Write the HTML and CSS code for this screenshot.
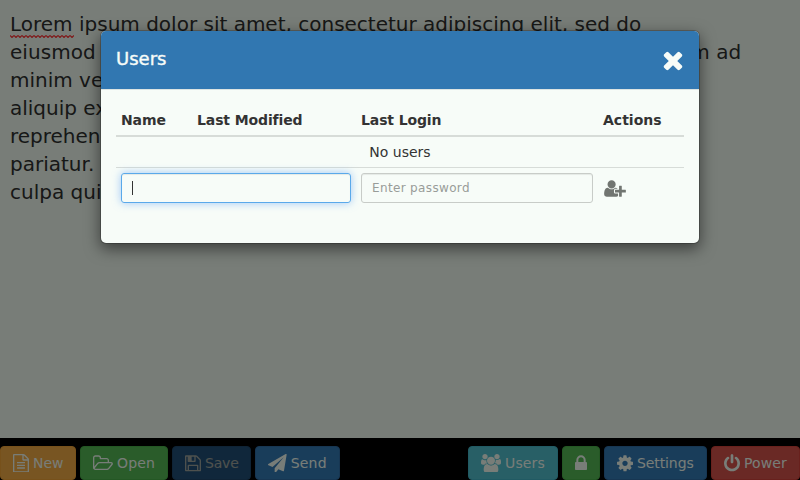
FILE: index.html
```
<!DOCTYPE html>
<html lang="en">
<head>
<meta charset="utf-8">
<title>Editor</title>
<link rel="stylesheet" href="styles.css">
</head>
<body>
<div class="app">
  <main class="editor"><span class="misspelt">Lorem<svg class="squiggle" width="64" height="3" viewBox="0 0 64 3"><defs><pattern id="zig" width="4" height="3" patternUnits="userSpaceOnUse"><path d="M0 .5L2 2.5L4 .5" fill="none" stroke="#f33" stroke-width="1.200"/></pattern></defs><rect width="64" height="3" fill="url(#zig)"/></svg></span> ipsum dolor sit amet, consectetur adipiscing elit, sed do<br><span class="wide">eiusmod tempor incididunt ut labore et dolore magna aliqua. Ut enim ad</span><br>minim veniam, quis nostrud exercitation ullamco laboris nisi ut<br>aliquip ex ea commodo consequat. Duis aute irure dolor in<br>reprehenderit in voluptate velit esse cillum dolore eu fugiat nulla<br>pariatur. Excepteur sint occaecat cupidatat non proident, sunt in<br>culpa qui officia deserunt mollit anim id est laborum.</main>
  <footer class="toolbar">
    <div class="group">
      <button class="btn warning new"><svg class="icon file" viewBox="128 0 1536 1792"><path d="M1596 380q28 28 48 76t20 88v1152q0 40-28 68t-68 28h-1344q-40 0-68-28t-28-68v-1600q0-40 28-68t68-28h896q40 0 88 20t76 48zm-444-244v376h376q-10-29-22-41l-313-313q-12-12-41-22zm384 1528v-1024h-416q-40 0-68-28t-28-68v-416h-768v1536h1280zm-1024-864q0-14 9-23t23-9h704q14 0 23 9t9 23v64q0 14-9 23t-23 9h-704q-14 0-23-9t-9-23v-64zm736 224q14 0 23 9t9 23v64q0 14-9 23t-23 9h-704q-14 0-23-9t-9-23v-64q0-14 9-23t23-9h704zm0 256q14 0 23 9t9 23v64q0 14-9 23t-23 9h-704q-14 0-23-9t-9-23v-64q0-14 9-23t23-9h704z"/></svg>New</button>
      <button class="btn success open"><svg class="icon folder" viewBox="64 0 1920 1792"><path d="M1845 931q0-35-53-35h-1088q-40 0-85.500 21.500t-71.500 52.500l-294 363q-18 24-18 40 0 35 53 35h1088q40 0 86-22t71-53l294-363q18-22 18-39zm-1141-163h768v-160q0-40-28-68t-68-28h-576q-40 0-68-28t-28-68v-64q0-40-28-68t-68-28h-320q-40 0-68 28t-28 68v853l256-315q44-53 116-87.500t140-34.500zm1269 163q0 62-46 120l-295 363q-43 53-116 87.500t-140 34.500h-1088q-92 0-158-66t-66-158v-960q0-92 66-158t158-66h320q92 0 158 66t66 158v32h544q92 0 158 66t66 158v160h192q54 0 99 24.500t67 70.500q15 32 15 68z"/></svg>Open</button>
      <button class="btn primary save" disabled><svg class="icon file" viewBox="128 0 1536 1792"><path d="M512 1536h768v-384h-768v384zm896 0h128v-896q0-14-10-38.500t-20-34.500l-281-281q-10-10-34-20t-39-10v416q0 40-28 68t-68 28h-576q-40 0-68-28t-28-68v-416h-128v1280h128v-416q0-40 28-68t68-28h832q40 0 68 28t28 68v416zm-384-928v-320q0-13-9.500-22.500t-22.500-9.500h-192q-13 0-22.500 9.500t-9.500 22.500v320q0 13 9.500 22.500t22.500 9.500h192q13 0 22.500-9.500t9.500-22.500zm640 32v928q0 40-28 68t-68 28h-1344q-40 0-68-28t-28-68v-1344q0-40 28-68t68-28h928q40 0 88 20t76 48l280 280q28 28 48 76t20 88z"/></svg>Save</button>
      <button class="btn primary send"><svg class="icon plane" viewBox="0 0 1792 1792"><path d="M1764 11q33 24 27 64l-256 1536q-5 29-32 45-14 8-31 8-11 0-24-5l-453-185-242 295q-18 23-49 23-13 0-22-4-19-7-30.500-23.500t-11.500-36.500v-349l864-1059-1069 925-395-162q-37-14-40-55-2-40 32-59l1664-960q15-9 32-9 20 0 36 11z"/></svg>Send</button>
    </div>
    <div class="group">
      <button class="btn info users"><svg class="icon people" viewBox="64 0 1920 1792"><path d="M657 896q-162 5-265 128h-134q-82 0-138-40.500t-56-118.500q0-353 124-353 6 0 43.500 21t97.500 42.500 119 21.500q67 0 133-23-5 37-5 66 0 159 90 284zm1071 637q0 120-73 189.500t-194 69.500h-874q-121 0-194-69.500t-73-189.500q0-53 3.500-103.500t14-109 26.500-108.500 43-97.500 62-81 85.500-53.500 111.500-20q10 0 43 21.500t73 48 107 48 135 21.500 135-21.500 107-48 73-48 43-21.500q61 0 111.500 20t85.500 53.500 62 81 43 97.500 26.500 108.500 14 109 3.500 103.500zm-1024-1277q0 106-75 181t-181 75-181-75-75-181 75-181 181-75 181 75 75 181zm704 384q0 159-112.500 271.500t-271.500 112.500-271.500-112.500-112.500-271.500 112.500-271.500 271.500-112.500 271.500 112.500 112.500 271.500zm576 225q0 78-56 118.500t-138 40.500h-134q-103-123-265-128 90-125 90-284 0-29-5-66 66 23 133 23 59 0 119-21.500t97.500-42.500 43.500-21q124 0 124 353zm-128-609q0 106-75 181t-181 75-181-75-75-181 75-181 181-75 181 75 75 181z"/></svg>Users</button>
      <button class="btn success locker" aria-label="Lock"><svg class="icon lock" viewBox="320 0 1152 1792"><path d="M640 768h512v-192q0-106-75-181t-181-75-181 75-75 181v192zm832 96v576q0 40-28 68t-68 28h-960q-40 0-68-28t-28-68v-576q0-40 28-68t68-28h32v-192q0-184 132-316t316-132 316 132 132 316v192h32q40 0 68 28t28 68z"/></svg></button>
      <button class="btn primary settings"><svg class="icon file" viewBox="128 0 1536 1792"><path d="M1152 896q0-106-75-181t-181-75-181 75-75 181 75 181 181 75 181-75 75-181zm512-109v222q0 12-8 23t-20 13l-185 28q-19 54-39 91 35 50 107 138 10 12 10 25t-9 23q-27 37-99 108t-94 71q-12 0-26-9l-138-108q-44 23-91 38-16 136-29 186-7 28-36 28h-222q-14 0-24.500-8.500t-11.500-21.500l-28-184q-49-16-90-37l-141 107q-10 9-25 9-14 0-25-11-126-114-165-168-7-10-7-23 0-12 8-23 15-21 51-66.500t54-70.500q-27-50-41-99l-183-27q-13-2-21-12.500t-8-23.500v-222q0-12 8-23t19-13l186-28q14-46 39-92-40-57-107-138-10-12-10-24 0-10 9-23 26-36 98.500-107.500t94.500-71.500q13 0 26 10l138 107q44-23 91-38 16-136 29-186 7-28 36-28h222q14 0 24.500 8.500t11.500 21.500l28 184q49 16 90 37l142-107q9-9 24-9 13 0 25 10 129 119 165 170 7 8 7 22 0 12-8 23-15 21-51 66.500t-54 70.500q26 50 41 98l183 28q13 2 21 12.500t8 23.500z"/></svg>Settings</button>
      <button class="btn danger power"><svg class="icon file" viewBox="128 0 1536 1792"><path d="M1664 896q0 156-61 298t-164 245-245 164-298 61-298-61-245-164-164-245-61-298q0-182 80.500-343t226.500-270q43-32 95.500-25t83.500 50q32 42 24.500 94.500t-49.500 84.500q-98 74-151.500 181t-53.500 228q0 104 40.500 198.500t109.500 163.500 163.500 109.500 198.500 40.500 198.500-40.500 163.500-109.500 109.500-163.500 40.500-198.500q0-121-53.500-228t-151.500-181q-42-32-49.500-84.500t24.500-94.500q31-43 84-50t95 25q146 109 226.500 270t80.500 343zm-640-768v640q0 52-38 90t-90 38-90-38-38-90v-640q0-52 38-90t90-38 90 38 38 90z"/></svg>Power</button>
    </div>
  </footer>
</div>
<div class="overlay">
  <section class="modal">
    <header class="modal-header">
      <h4>Users</h4>
      <svg class="close" viewBox="0 0 1792 1792"><path d="M1490 1322q0 40-28 68l-136 136q-28 28-68 28t-68-28l-294-294-294 294q-28 28-68 28t-68-28l-136-136q-28-28-28-68t28-68l294-294-294-294q-28-28-28-68t28-68l136-136q28-28 68-28t68 28l294 294 294-294q28-28 68-28t68 28l136 136q28 28 28 68t-28 68l-294 294 294 294q28 28 28 68z"/></svg>
    </header>
    <div class="table">
      <div class="row head"><div class="tight">Name</div><div class="tight">Last Modified</div><div class="tight">Last Login</div><div>Actions</div></div>
      <div class="row empty">No users</div>
      <div class="row form">
        <div class="input focused"><span class="caret"></span></div>
        <div class="input">Enter password</div>
        <svg class="add" viewBox="0 0 2048 1792"><path d="M704 896q-159 0-271.500-112.500t-112.500-271.500 112.500-271.500 271.500-112.500 271.500 112.500 112.500 271.500-112.500 271.500-271.500 112.500zm960 128h352q13 0 22.500 9.500t9.500 22.500v192q0 13-9.500 22.500t-22.500 9.500h-352v352q0 13-9.500 22.500t-22.500 9.500h-192q-13 0-22.500-9.500t-9.500-22.500v-352h-352q-13 0-22.500-9.500t-9.500-22.500v-192q0-13 9.500-22.500t22.500-9.500h352v-352q0-13 9.500-22.500t22.500-9.500h192q13 0 22.500 9.500t9.500 22.500v352zm-736 224q0 52 38 90t90 38h256v238q-68 50-171 50h-874q-121 0-194-69t-73-190q0-53 3.500-103.500t14-109 26.500-108.500 43-97.500 62-81 85.500-53.500 111.500-20q19 0 39 17 79 61 154.500 91.500t164.500 30.500 164.500-30.500 154.500-91.500q20-17 39-17 132 0 217 96h-223q-52 0-90 38t-38 90v192z"/></svg>
      </div>
    </div>
  </section>
</div>
</body>
</html>
```
FILE: styles.css
```
* { box-sizing: border-box; }
body { margin: 0; font: 14px/20px "DejaVu Sans", sans-serif; color: #333; overflow: hidden; }
svg { display: block; fill: currentColor; flex: none; }
.app { height: 480px; display: flex; flex-direction: column; background: #000; }
.editor { height: 438px; padding: 10px; background: #f0faf1; color: #2e302e; font-size: 20px; line-height: 28px; white-space: nowrap; }
.wide { letter-spacing: .055px; }
.misspelt { position: relative; }
.squiggle { position: absolute; left: 0; bottom: -2px; }
.toolbar { display: flex; justify-content: space-between; padding-top: 8px; }
.group { display: flex; gap: 4px; }
.btn { display: flex; align-items: center; gap: 4px; height: 34px; padding: 0 12px; border: 1px solid; border-radius: 4px; color: #f0faf1; font: inherit; white-space: nowrap; }
.icon { height: 18.67px; }
.file { width: 16px; }
.folder, .people { width: 20px; }
.plane { width: 18.67px; }
.lock { width: 12px; }
.new { width: 76px; }
.open { width: 88px; letter-spacing: .2px; }
.save { width: 79px; letter-spacing: -.2px; }
.send { width: 85px; letter-spacing: .2px; }
.users { width: 90px; letter-spacing: .15px; }
.locker { width: 38px; }
.settings { width: 103px; letter-spacing: -.1px; }
.power { width: 89px; letter-spacing: .1px; }
.warning { background: #f0aa44; border-color: #eea236; }
.success { background: #54b954; border-color: #48ae48; }
.primary { background: #337ab5; border-color: #2e6da4; }
.info { background: #50becc; border-color: #42b4c6; }
.danger { background: #d5534a; border-color: #d0433a; }
.btn:disabled { opacity: .65; }
.overlay { position: absolute; inset: 0; display: flex; justify-content: center; align-items: flex-start; padding-top: 30px; background: rgba(0,0,0,.5); }
.modal { width: 600px; height: 214px; border: 1px solid rgba(0,0,0,.2); border-radius: 6px; background: #f7fcf8; background-clip: padding-box; box-shadow: 0 5px 15px rgba(0,0,0,.5); }
.modal-header { display: flex; justify-content: space-between; height: 59px; padding: 15px 12px 0 15px; background: #3177b1; border-bottom: 1px solid #dce4e2; border-radius: 5px 5px 0 0; color: #f7fcf8; }
.modal-header h4 { margin: 0; font-size: 18px; line-height: 26px; font-weight: 500; -webkit-text-stroke: .4px #f7fcf8; }
.close { width: 28px; height: 28px; }
.table { margin: 15px 15px 0; }
.row { display: grid; }
.head { grid-template-columns: 76px 164px 242px 86px; height: 32px; padding-top: 5px; border-bottom: 2px solid #d7dcd8; font-weight: bold; }
.head div { padding-left: 5px; }
.tight { letter-spacing: -.12px; }
.empty { height: 31px; line-height: 30px; text-align: center; border-bottom: 1px solid #d7dcd8; }
.form { grid-template-columns: 230px 232px auto; gap: 10px; padding: 5px; }
.input { display: flex; align-items: center; height: 30px; padding: 0 10px; border: 1px solid #c8ccc8; border-radius: 3px; color: #999c99; font-size: 12px; letter-spacing: .35px; box-shadow: inset 0 1px 1px rgba(0,0,0,.075); }
.focused { border-color: #5aa9ea; box-shadow: inset 0 1px 1px rgba(0,0,0,.075), 0 0 8px rgba(102,165,245,.6); }
.caret { width: 1px; height: 14px; background: #333; }
.add { width: 22px; height: 19px; margin: 6px 0 0 1px; color: #717571; }
```
